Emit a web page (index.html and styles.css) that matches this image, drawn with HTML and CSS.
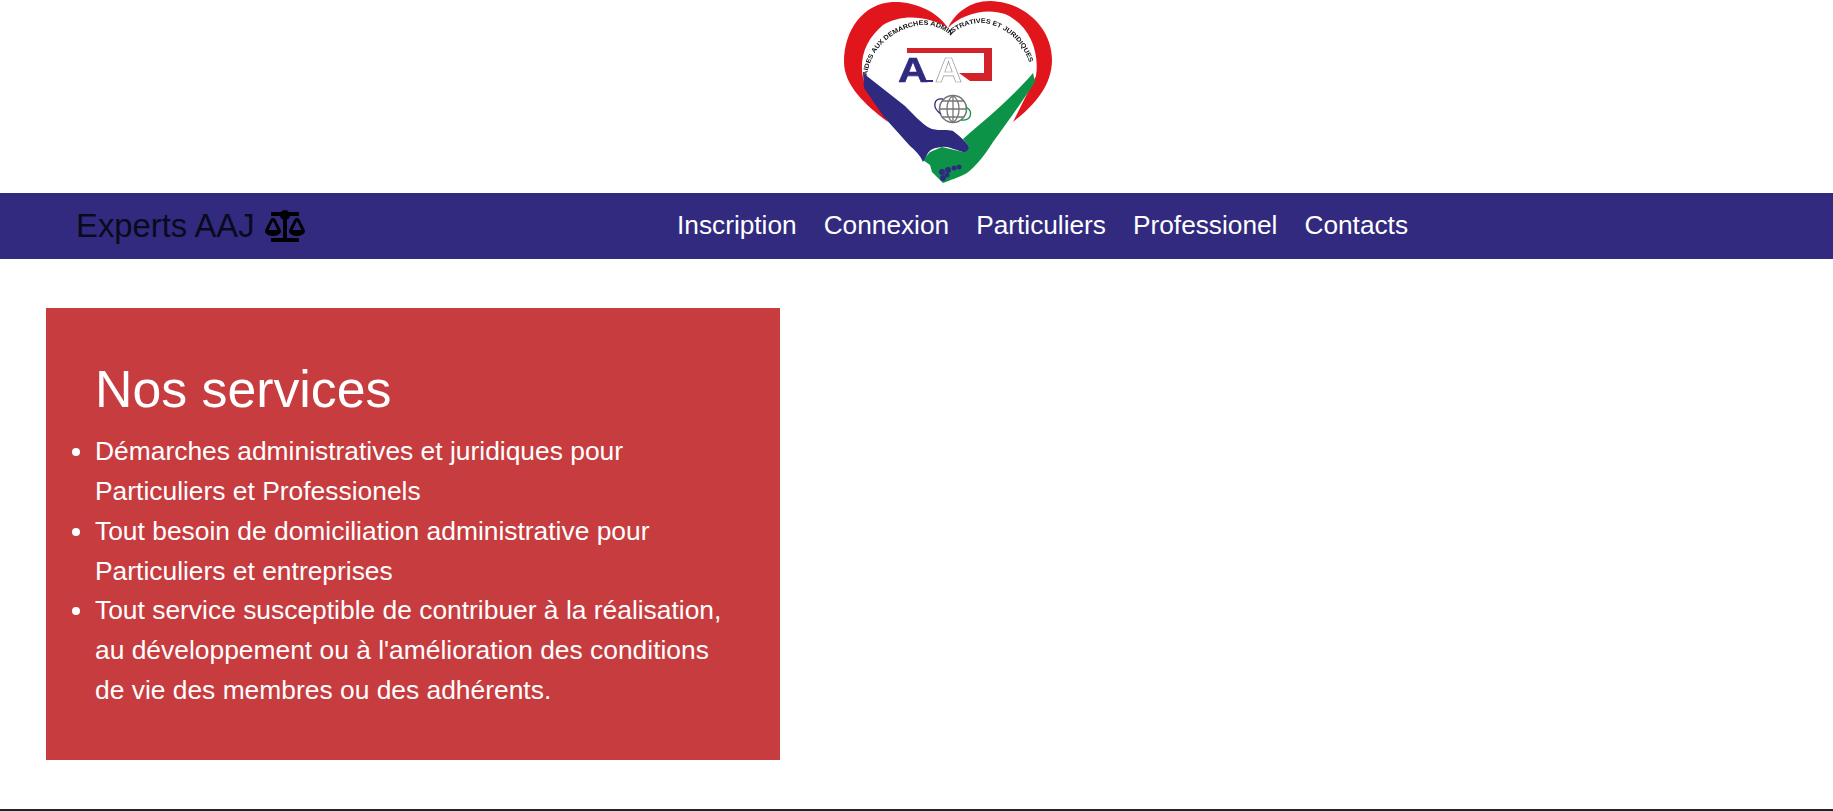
FILE: index.html
```html
<!DOCTYPE html>
<html lang="fr">
  <head>
    <meta charset="UTF-8" />
    <meta name="viewport" content="width=device-width, initial-scale=1.0" />
    <title>Experts AAJ</title>
    <link rel="stylesheet" href="styles.css">
  </head>
  <body>
    <header class="logo-bar">
      <svg class="logo" viewBox="0 0 240 193" xmlns="http://www.w3.org/2000/svg">
        <defs>
          <filter id="soft"><feGaussianBlur stdDeviation="0.55" /></filter>
          <path id="arc" d="M47 76 C50 50 70 30 100 25 C112 24 122 28 130 35 C140 26 155 22 165 23 C190 28 205 45 211 68" />
        </defs>
        <g filter="url(#soft)">
          <!-- heart -->
          <path fill="#e0141e" d="M128 28 C118 12 95 1 72 2 C43 4 24 30 24 62 C24 85 45 105 68 122 L44 82 C38 60 45 40 63 25 C80 14 108 15 128 28 C140 15 165 7 185 14 C208 24 220 50 216 76 L193 122 C215 105 232 85 232 60 C232 28 205 2 170 1 C150 1 135 13 128 28 Z" />
          <!-- hands -->
          <path fill="#0f9346" d="M213 73 L215 82 C200 105 185 125 173 142 C165 155 155 167 147 173 C138 178 130 180 123 183 L118 178 L112 172 L110 165 L103 160 L110 152 L122 147 L143 152 L149 147 L143 139 C165 120 190 100 213 73 Z" />
          <path fill="#2f2a80" d="M43 73 L85 106 C95 116 105 127 112 129 C120 131 128 129 133 131 C140 136 146 142 149 147 C148 151 146 152 143 152 C135 150 128 146 122 147 C115 148 112 148 108 153 L103 162 C100 155 95 150 90 146 L64 117 L44 88 Z" />
          <g fill="#2f2a80">
            <circle cx="123" cy="178" r="3" />
            <circle cx="122" cy="172" r="3" />
            <circle cx="128" cy="170" r="3" />
            <circle cx="127" cy="175" r="2.5" />
            <circle cx="134" cy="168" r="2.5" />
            <circle cx="139" cy="167" r="2.5" />
          </g>
          <!-- letters -->
          <text class="logo-arc">
            <textPath href="#arc" textLength="212" lengthAdjust="spacingAndGlyphs">AIDES AUX DEMARCHES ADMINISTRATIVES ET JURIDIQUES</textPath>
          </text>
          <path fill="#d4222a" d="M87 48 H172 V81 H150 L139 73 H164 V53 H87 Z" />
          <text class="logo-a logo-a-blue" x="78" y="82" textLength="30" lengthAdjust="spacingAndGlyphs">A</text>
          <rect x="104" y="80" width="9" height="2" fill="#2f2a80" />
          <text class="logo-a logo-a-white" x="115" y="82" textLength="27" lengthAdjust="spacingAndGlyphs">A</text>
          <!-- globe -->
          <circle cx="133" cy="109" r="13.5" fill="#fff" stroke="#777" stroke-width="1.6" />
          <path fill="none" stroke="#777" stroke-width="1.3" d="M133 95.5 V122.5 M119.5 109 H146.5 M122 101 H144 M122 117 H144 M133 95.5 C125 101 125 117 133 122.5 M133 95.5 C141 101 141 117 133 122.5" />
          <path fill="none" stroke="#2f2a80" stroke-width="1.3" d="M121 114 C112 108 113 98 123 99" />
          <path fill="none" stroke="#0f9346" stroke-width="1.3" d="M146 107 C154 112 151 121 141 120" />
        </g>
      </svg>
    </header>

    <nav class="navbar">
      <a class="brand" href="#">
        Experts AAJ
        <svg class="brand-icon" viewBox="0 0 640 512" xmlns="http://www.w3.org/2000/svg">
          <path d="M256 336h-.02c0-16.18 1.34-8.73-85.05-181.51-17.65-35.29-68.19-35.36-85.87 0C-2.06 328.75.02 320.33.02 336H0c0 44.18 57.31 80 128 80s128-35.82 128-80zM128 176l72 144H56l72-144zm511.98 160c0-16.18 1.34-8.73-85.05-181.51-17.65-35.29-68.19-35.36-85.87 0-87.12 174.26-85.04 165.84-85.04 181.51H384c0 44.18 57.31 80 128 80s128-35.82 128-80h-.02zM440 320l72-144 72 144H440zm88 128H352V153.25c23.51-10.29 41.16-31.48 46.39-57.25H528c8.84 0 16-7.16 16-16V48c0-8.84-7.16-16-16-16H383.64C369.04 12.68 346.09 0 320 0s-49.04 12.68-63.64 32H112c-8.84 0-16 7.16-16 16v32c0 8.84 7.16 16 16 16h129.61c5.23 25.76 22.87 46.96 46.39 57.25V448H112c-8.84 0-16 7.16-16 16v32c0 8.84 7.16 16 16 16h416c8.84 0 16-7.16 16-16v-32c0-8.84-7.16-16-16-16z" />
        </svg>
      </a>
      <ul class="nav-links">
        <li><a href="#">Inscription</a></li>
        <li><a href="#">Connexion</a></li>
        <li><a href="#">Particuliers</a></li>
        <li><a href="#">Professionel</a></li>
        <li><a href="#">Contacts</a></li>
      </ul>
    </nav>

    <main class="content">
      <section class="services">
        <h1>Nos services</h1>
        <ul>
          <li>Démarches administratives et juridiques pour Particuliers et Professionels</li>
          <li>Tout besoin de domiciliation administrative pour Particuliers et entreprises</li>
          <li>Tout service susceptible de contribuer à la réalisation, au développement ou à l'amélioration des conditions de vie des membres ou des adhérents.</li>
        </ul>
      </section>
    </main>

    <footer class="footer"></footer>
  </body>
</html>
```

FILE: styles.css
```css
body {
  margin: 0;
  background-color: #fff;
  font-family: "Liberation Sans", Arial, sans-serif;
  overflow: hidden;
}

.logo-bar {
  height: 193px;
  padding-left: 820px;
}

.logo {
  display: block;
  width: 240px;
  height: 193px;
}

.logo-arc {
  font-size: 6.5px;
  font-weight: bold;
  fill: #111;
}

.logo-a {
  font-size: 35px;
  font-weight: bold;
}

.logo-a-blue {
  fill: #2f2a80;
  stroke: #2f2a80;
  stroke-width: 0.6;
}

.logo-a-white {
  fill: #fff;
  stroke: #999;
  stroke-width: 0.7;
}

.navbar {
  display: flex;
  align-items: center;
  height: 66px;
  padding-left: 76px;
  background-color: #312a7e;
}

.brand {
  display: flex;
  align-items: center;
  gap: 10px;
  width: 601px;
  font-size: 32.8px;
  color: #0a0a1e;
  text-decoration: none;
}

.brand-icon {
  width: 40px;
  height: 32px;
  fill: #000;
}

.nav-links {
  display: flex;
  gap: 27px;
  margin: 0;
  padding: 0 0 2px;
  list-style: none;
}

.nav-links a {
  font-size: 26.25px;
  color: #fff;
  text-decoration: none;
}

.content {
  padding: 49px 0 49px 46px;
}

.services {
  box-sizing: border-box;
  width: 734px;
  height: 452px;
  padding: 50px 49px 0;
  background-color: #c73c3f;
  color: #fff;
}

.services h1 {
  margin: 0 0 12px;
  font-size: 51.8px;
  font-weight: normal;
  line-height: 1.2;
}

.services ul {
  margin: 0;
  padding: 0;
  font-size: 26.4px;
  line-height: 39.8px;
}

.footer {
  height: 2px;
  background-color: #212529;
}
```
